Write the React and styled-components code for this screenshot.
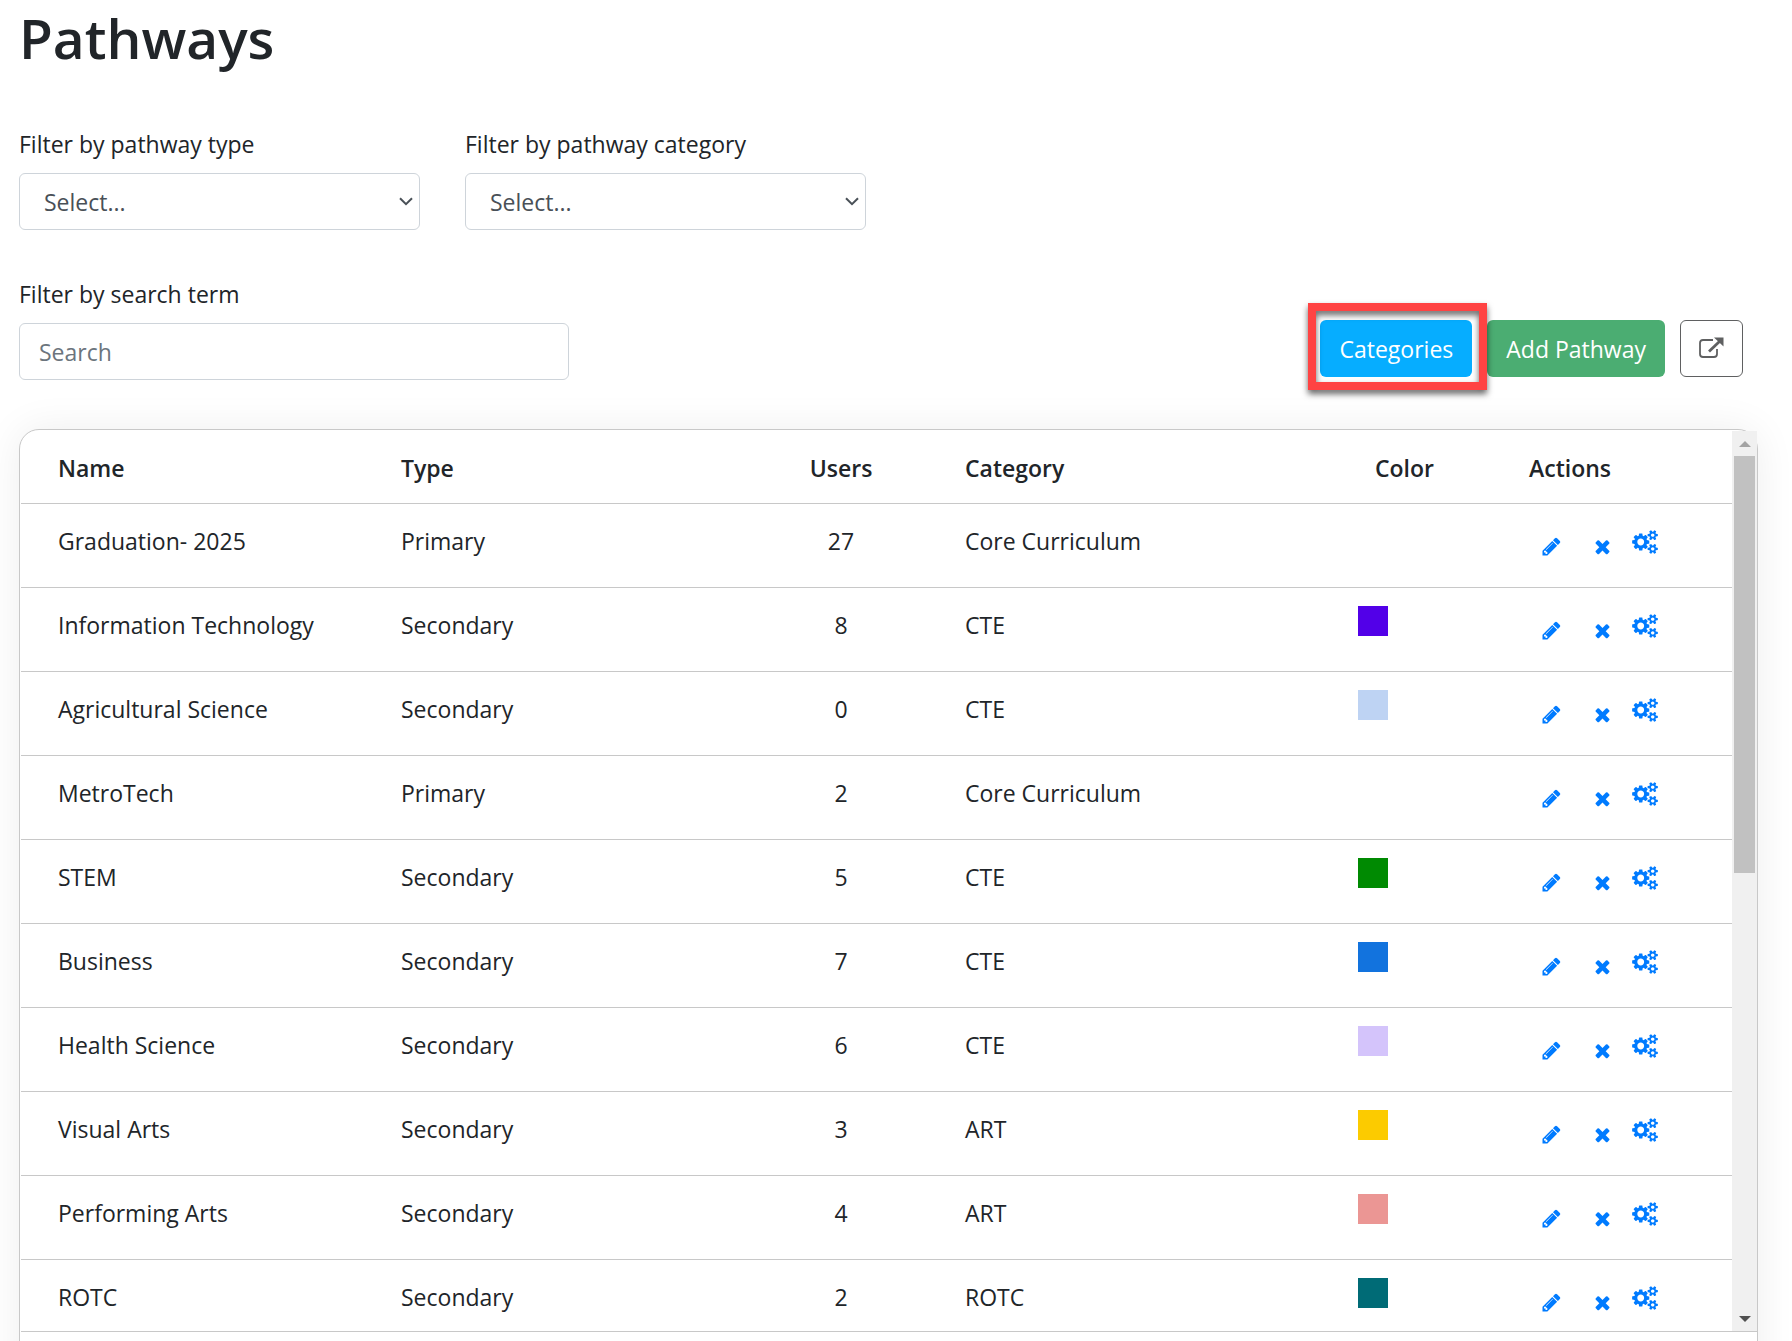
import React from 'react';
import styled, { createGlobalStyle } from 'styled-components';

const GlobalStyle = createGlobalStyle`
  *, *::before, *::after {
    box-sizing: border-box;
  }

  body {
    margin: 0;
    background: #fff;
    color: #212529;
    font-family: 'Open Sans', 'Noto Sans', sans-serif;
    font-size: 23px;
    line-height: 36px;
  }
`;

const pathways = [
  { name: 'Graduation- 2025', type: 'Primary', users: 27, category: 'Core Curriculum' },
  { name: 'Information Technology', type: 'Secondary', users: 8, category: 'CTE', color: '#5200e8' },
  { name: 'Agricultural Science', type: 'Secondary', users: 0, category: 'CTE', color: '#bed3f3' },
  { name: 'MetroTech', type: 'Primary', users: 2, category: 'Core Curriculum' },
  { name: 'STEM', type: 'Secondary', users: 5, category: 'CTE', color: '#008a02' },
  { name: 'Business', type: 'Secondary', users: 7, category: 'CTE', color: '#1273de' },
  { name: 'Health Science', type: 'Secondary', users: 6, category: 'CTE', color: '#d4c4fb' },
  { name: 'Visual Arts', type: 'Secondary', users: 3, category: 'ART', color: '#fccb00' },
  { name: 'Performing Arts', type: 'Secondary', users: 4, category: 'ART', color: '#eb9694' },
  { name: 'ROTC', type: 'Secondary', users: 2, category: 'ROTC', color: '#006b76' },
];

const PencilIcon = () => (
  <svg width="21" height="21" viewBox="0 0 1792 1792" fill="currentColor" aria-hidden="true">
    <path d="M491 1536l91-91-235-235-91 91v107h128v128h107zm523-928q0-22-22-22-10 0-17 7l-542 542q-7 7-7 17 0 22 22 22 10 0 17-7l542-542q7-7 7-17zm-54-192l416 416-832 832h-416v-416zm683 96q0 53-37 90l-166 166-416-416 166-165q36-38 90-38 53 0 91 38l235 234q37 39 37 91z" />
  </svg>
);

const TimesIcon = () => (
  <svg width="21" height="21" viewBox="0 0 1792 1792" fill="currentColor" aria-hidden="true">
    <path d="M1490 1322q0 40-28 68l-136 136q-28 28-68 28t-68-28l-294-294-294 294q-28 28-68 28t-68-28l-136-136q-28-28-28-68t28-68l294-294-294-294q-28-28-28-68t28-68l136-136q28-28 68-28t68 28l294 294 294-294q28-28 68-28t68 28l136 136q28 28 28 68t-28 68l-294 294 294 294q28 28 28 68z" />
  </svg>
);

const CogsIcon = () => (
  <svg width="26" height="24" viewBox="0 0 1920 1792" fill="currentColor" aria-hidden="true">
    <path d="M896 896q0-106-75-181t-181-75-181 75-75 181 75 181 181 75 181-75 75-181zm768 512q0-52-38-90t-90-38-90 38-38 90q0 53 37.5 90.5t90.5 37.5 90.5-37.5 37.5-90.5zm0-1024q0-52-38-90t-90-38-90 38-38 90q0 53 37.5 90.5t90.5 37.5 90.5-37.5 37.5-90.5zm-384 421v185q0 10-7 19.5t-16 10.5l-155 24q-11 35-32 76 34 48 90 115 7 11 7 20 0 12-7 19-23 30-82.5 89.5t-78.5 59.5q-11 0-21-7l-115-90q-37 19-77 31-11 108-23 155-7 24-30 24h-186q-11 0-20-7.5t-10-17.5l-23-153q-34-10-75-31l-118 89q-7 7-20 7-11 0-21-8-144-133-144-160 0-9 7-19 10-14 41-53t47-61q-23-44-35-82l-152-24q-10-1-17-9.5t-7-19.5v-185q0-10 7-19.5t16-10.5l155-24q11-35 32-76-34-48-90-115-7-11-7-20 0-12 7-20 22-30 82-89t79-59q11 0 21 7l115 90q34-18 77-32 11-108 23-154 7-24 30-24h186q11 0 20 7.5t10 17.5l23 153q34 10 75 31l118-89q8-7 20-7 11 0 21 8 144 133 144 160 0 8-7 19-12 16-42 54t-45 60q23 48 34 82l152 23q10 2 17 10.5t7 19.5zm640 533v140q0 16-149 31-12 27-30 52 51 113 51 138 0 4-4 7-122 71-124 71-8 0-46-47t-52-68q-20 2-30 2t-30-2q-14 21-52 68t-46 47q-2 0-124-71-4-3-4-7 0-25 51-138-18-25-30-52-149-15-149-31v-140q0-16 149-31 13-29 30-52-51-113-51-138 0-4 4-7 4-2 35-20t59-34 30-16q8 0 46 46.5t52 67.5q20-2 30-2t30 2q51-71 92-112l6-2q4 0 124 70 4 3 4 7 0 25-51 138 17 23 30 52 149 15 149 31zm0-1024v140q0 16-149 31-12 27-30 52 51 113 51 138 0 4-4 7-122 71-124 71-8 0-46-47t-52-68q-20 2-30 2t-30-2q-14 21-52 68t-46 47q-2 0-124-71-4-3-4-7 0-25 51-138-18-25-30-52-149-15-149-31v-140q0-16 149-31 13-29 30-52-51-113-51-138 0-4 4-7 4-2 35-20t59-34 30-16q8 0 46 46.5t52 67.5q20-2 30-2t30 2q51-71 92-112l6-2q4 0 124 70 4 3 4 7 0 25-51 138 17 23 30 52 149 15 149 31z" />
  </svg>
);

const ExternalIcon = () => (
  <svg width="25" height="22" viewBox="0 0 25 22" fill="none" stroke="currentColor" aria-hidden="true">
    <path d="M14 3H4Q1 3 1 6V17Q1 20 4 20H15Q18 20 18 17V12" strokeWidth="1.8" />
    <path d="M10 14.5L21 4" strokeWidth="2.8" />
    <path d="M15 0.5H24.5V9.5Z" fill="currentColor" stroke="none" />
  </svg>
);

function SelectField({ id, label }) {
  return (
    <Field>
      <label htmlFor={id}>{label}</label>
      <SelectWrapper>
        <Select id={id} defaultValue="">
          <option value="">Select...</option>
        </Select>
        <svg width="14" height="9" viewBox="0 0 14 9" fill="none" aria-hidden="true">
          <path d="M1 1.2L7 7.2L13 1.2" stroke="#495057" strokeWidth="2" />
        </svg>
      </SelectWrapper>
    </Field>
  );
}

function PathwayRow({ pathway }) {
  return (
    <tr>
      <Cell>{pathway.name}</Cell>
      <Cell>{pathway.type}</Cell>
      <Cell $align="center">{pathway.users}</Cell>
      <Cell>{pathway.category}</Cell>
      <Cell>{pathway.color && <Swatch $color={pathway.color} />}</Cell>
      <Cell>
        <Actions>
          <IconButton aria-label={`Edit ${pathway.name}`}>
            <PencilIcon />
          </IconButton>
          <IconButton aria-label={`Delete ${pathway.name}`}>
            <TimesIcon />
          </IconButton>
          <IconButton $raised aria-label={`Settings for ${pathway.name}`}>
            <CogsIcon />
          </IconButton>
        </Actions>
      </Cell>
    </tr>
  );
}

function App() {
  const [search, setSearch] = React.useState('');

  return (
    <Page>
      <GlobalStyle />
      <Title>Pathways</Title>
      <Filters>
        <SelectField id="pathway-type" label="Filter by pathway type" />
        <SelectField id="pathway-category" label="Filter by pathway category" />
      </Filters>
      <Toolbar>
        <Field $wide>
          <label htmlFor="search">Filter by search term</label>
          <SearchInput
            id="search"
            type="text"
            placeholder="Search"
            value={search}
            onChange={e => setSearch(e.target.value)}
          />
        </Field>
        <ButtonGroup>
          <Highlight>
            <Button $color="#06adff">Categories</Button>
          </Highlight>
          <Button $color="#4bad72">Add Pathway</Button>
          <OutlineButton aria-label="Open in new window">
            <ExternalIcon />
          </OutlineButton>
        </ButtonGroup>
      </Toolbar>
      <Card>
        <ScrollArea>
          <TableViewport>
            <Table>
              <colgroup>
                <col />
                <col className="type" />
                <col className="users" />
                <col className="category" />
                <col className="color" />
                <col className="actions" />
              </colgroup>
              <thead>
                <tr>
                  <HeadCell>Name</HeadCell>
                  <HeadCell>Type</HeadCell>
                  <HeadCell $align="center">Users</HeadCell>
                  <HeadCell>Category</HeadCell>
                  <HeadCell $indent>Color</HeadCell>
                  <HeadCell>Actions</HeadCell>
                </tr>
              </thead>
              <tbody>
                {pathways.map(pathway => (
                  <PathwayRow key={pathway.name} pathway={pathway} />
                ))}
              </tbody>
            </Table>
          </TableViewport>
          <Scrollbar aria-hidden="true">
            <Arrow />
            <Track>
              <Thumb />
            </Track>
            <Arrow $down />
          </Scrollbar>
        </ScrollArea>
      </Card>
    </Page>
  );
}

const Page = styled.main`
  height: 100vh;
  overflow: hidden;
  padding: 0 34px 0 19px;
`;

const Title = styled.h1`
  margin: 0 0 50px;
  font-size: 55px;
  font-weight: 600;
  line-height: 76px;
`;

const Filters = styled.div`
  display: flex;
  gap: 45px;
  margin-bottom: 46px;
`;

const Field = styled.div`
  display: flex;
  flex-direction: column;
  gap: 11px;
  width: ${({ $wide }) => ($wide ? '550px' : '401px')};
`;

const SelectWrapper = styled.div`
  position: relative;

  svg {
    position: absolute;
    top: 24px;
    right: 7px;
    pointer-events: none;
  }
`;

const Select = styled.select`
  appearance: none;
  display: block;
  width: 100%;
  height: 57px;
  padding: 0 24px;
  border: 1px solid #ced4da;
  border-radius: 6px;
  background: #fff;
  color: #495057;
  font: inherit;
`;

const SearchInput = styled.input`
  width: 100%;
  height: 57px;
  padding: 0 19px;
  border: 1px solid #ced4da;
  border-radius: 6px;
  color: #495057;
  font: inherit;

  &::placeholder {
    color: #6c757d;
    opacity: 1;
  }
`;

const Toolbar = styled.div`
  display: flex;
  justify-content: space-between;
  margin-bottom: 49px;
  padding-right: 15px;
`;

const ButtonGroup = styled.div`
  display: flex;
  align-items: flex-end;
  gap: 15px;
  padding-bottom: 3px;
`;

const Highlight = styled.div`
  position: relative;

  &::after {
    content: '';
    position: absolute;
    inset: -17px -15px -13px -12px;
    border: 8px solid #ff4343;
    filter: drop-shadow(0 4px 3px rgba(0, 0, 0, 0.6));
    pointer-events: none;
  }
`;

const Button = styled.button`
  display: block;
  height: 57px;
  padding: 0 19px;
  border: 0;
  border-radius: 6px;
  background: ${({ $color }) => $color};
  color: #fff;
  font: inherit;
`;

const OutlineButton = styled.button`
  display: flex;
  align-items: center;
  justify-content: center;
  width: 63px;
  height: 57px;
  padding: 0 0 2px;
  border: 1px solid #5f6061;
  border-radius: 6px;
  background: #fff;
  color: #5f6061;
`;

const Card = styled.section`
  padding: 1px 0 60px 1px;
  border: 1px solid #c8c8c8;
  border-radius: 20px;
  background: #fff;
  box-shadow: 0 0 40px rgba(0, 0, 0, 0.07);
`;

const ScrollArea = styled.div`
  display: flex;
  height: 901px;
  border-bottom: 1px solid #c8c8c8;
`;

const TableViewport = styled.div`
  flex: 1;
  min-width: 0;
  overflow: hidden;
`;

const Table = styled.table`
  width: 100%;
  table-layout: fixed;
  border-collapse: separate;
  border-spacing: 0;

  .type {
    width: 316px;
  }

  .users {
    width: 248px;
  }

  .category {
    width: 393px;
  }

  .color {
    width: 171px;
  }

  .actions {
    width: 203px;
  }

  td:first-child,
  th:first-child {
    padding-left: 37px;
  }
`;

const HeadCell = styled.th`
  height: 73px;
  padding: 2px 0 0 ${({ $indent }) => ($indent ? '17px' : '0')};
  border-bottom: 1px solid #c8c8c8;
  text-align: ${({ $align }) => $align || 'left'};
  font-weight: 600;
`;

const Cell = styled.td`
  height: 84px;
  padding: 18px 0 0;
  border-bottom: 1px solid #c8c8c8;
  line-height: 38px;
  text-align: ${({ $align }) => $align || 'left'};
  vertical-align: top;
`;

const Swatch = styled.div`
  width: 30px;
  height: 30px;
  background: ${({ $color }) => $color};
`;

const Actions = styled.div`
  display: grid;
  grid-template-columns: 51px 40px auto;
  align-items: end;
  justify-content: start;
  height: 35px;
  padding-left: 12px;
`;

const IconButton = styled.button`
  display: flex;
  padding: 0;
  border: 0;
  margin-bottom: ${({ $raised }) => ($raised ? '3px' : '0')};
  background: none;
  color: #007bff;
`;

const Scrollbar = styled.div`
  display: flex;
  flex-direction: column;
  width: 25px;
  background: #f0f0f0;
`;

const Track = styled.div`
  flex: 1;
  padding: 0 2px;
`;

const Thumb = styled.div`
  height: 49%;
  background: #c1c1c1;
`;

const Arrow = styled.div`
  display: flex;
  align-items: center;
  justify-content: center;
  height: 25px;

  &::before {
    content: '';
    border: 6px solid transparent;
    border-top: ${({ $down }) => ($down ? '6px solid #505050' : '0')};
    border-bottom: ${({ $down }) => ($down ? '0' : '6px solid #a3a3a3')};
  }
`;

export default App;
